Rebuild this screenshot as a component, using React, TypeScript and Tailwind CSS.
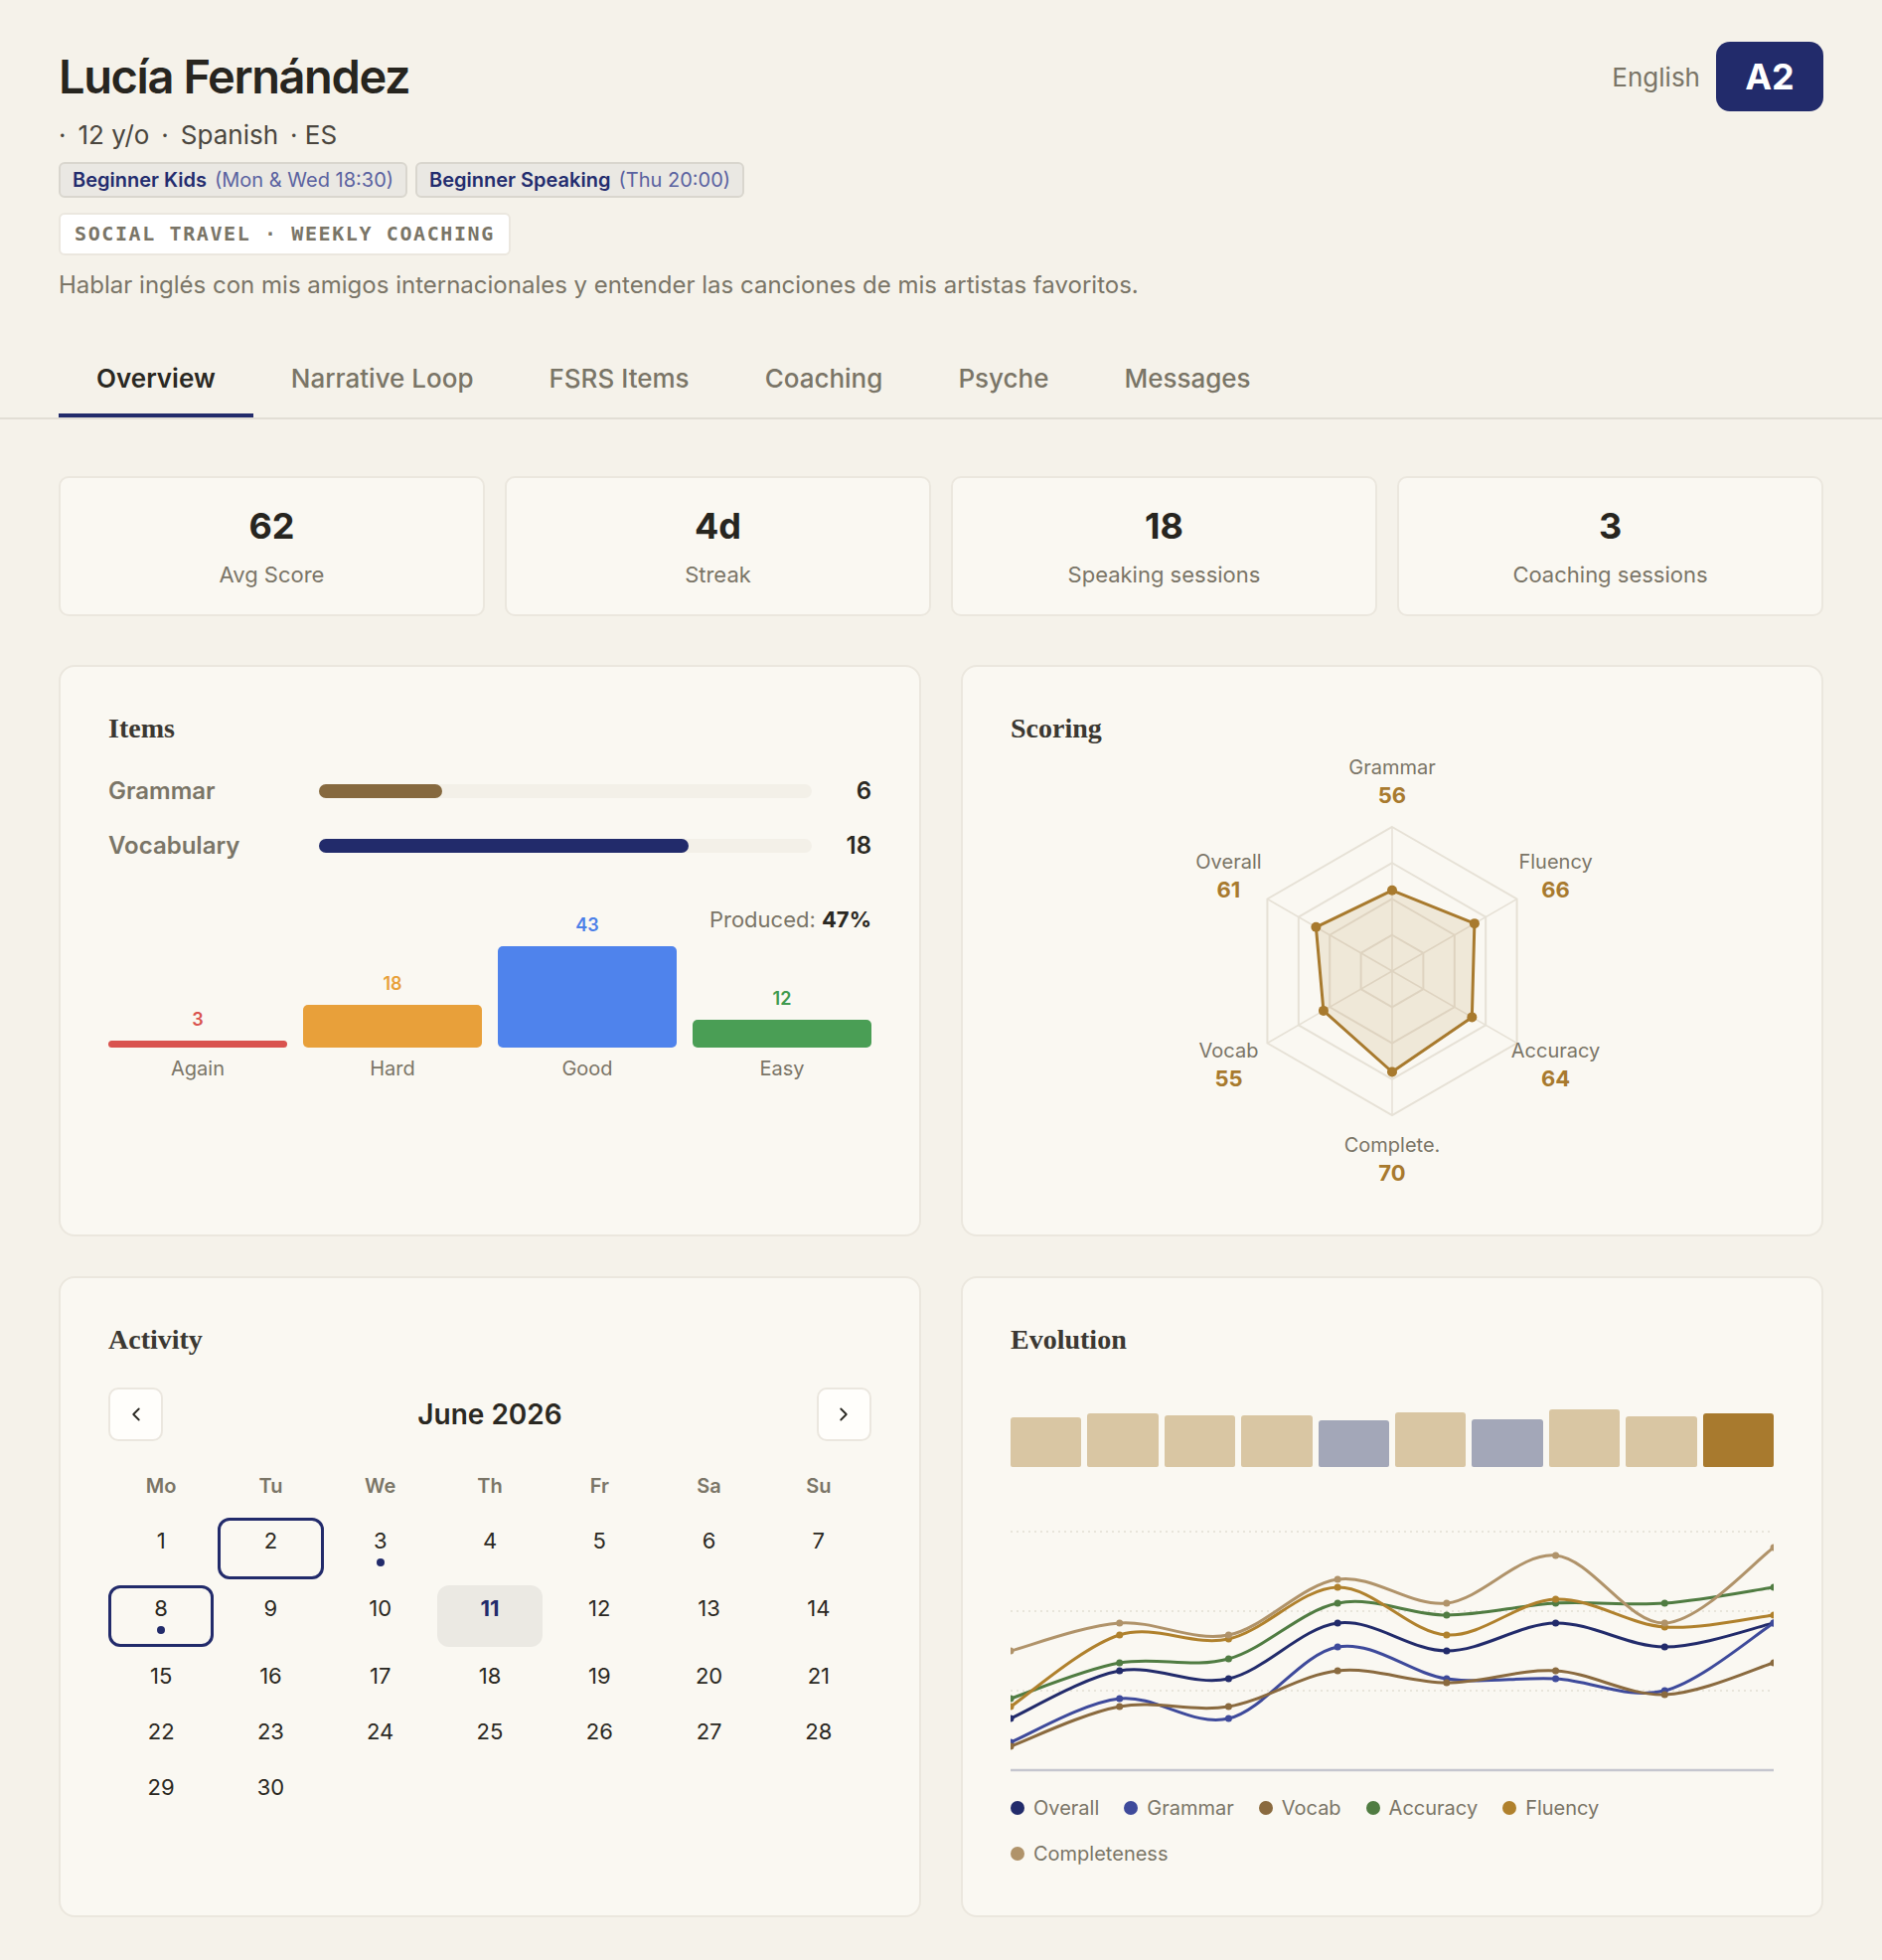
import { ChevronLeft, ChevronRight } from 'lucide-react'

const TABS = ['Overview', 'Narrative Loop', 'FSRS Items', 'Coaching', 'Psyche', 'Messages']

const STATS = [
  { value: '62', label: 'Avg Score' },
  { value: '4d', label: 'Streak' },
  { value: '18', label: 'Speaking sessions' },
  { value: '3', label: 'Coaching sessions' },
]

const ITEM_ROWS = [
  { label: 'Grammar', count: 6, bar: 'bg-[#86693f]' },
  { label: 'Vocabulary', count: 18, bar: 'bg-[#222b6b]' },
]

const RATINGS = [
  { label: 'Again', value: 3, bar: 'bg-[#d9534f]', text: 'text-[#d9534f]' },
  { label: 'Hard', value: 18, bar: 'bg-[#e8a03a]', text: 'text-[#e8a03a]' },
  { label: 'Good', value: 43, bar: 'bg-[#4f83ec]', text: 'text-[#4a7fe8]' },
  { label: 'Easy', value: 12, bar: 'bg-[#4a9e55]', text: 'text-[#3f9a4f]' },
]

const RADAR = [
  { label: 'Grammar', value: 56, angle: -90 },
  { label: 'Fluency', value: 66, angle: -30 },
  { label: 'Accuracy', value: 64, angle: 30 },
  { label: 'Complete.', value: 70, angle: 90 },
  { label: 'Vocab', value: 55, angle: 150 },
  { label: 'Overall', value: 61, angle: 210 },
]

const SESSIONS = [
  { h: 50, c: 'bg-[#d9c6a3]' },
  { h: 54, c: 'bg-[#d9c6a3]' },
  { h: 52, c: 'bg-[#d9c6a3]' },
  { h: 52, c: 'bg-[#d9c6a3]' },
  { h: 47, c: 'bg-[#a3a7b8]' },
  { h: 55, c: 'bg-[#d9c6a3]' },
  { h: 48, c: 'bg-[#a3a7b8]' },
  { h: 58, c: 'bg-[#d9c6a3]' },
  { h: 51, c: 'bg-[#d9c6a3]' },
  { h: 54, c: 'bg-[#a87a2e]' },
]

const SERIES = [
  { name: 'Overall', color: '#222b6b', dot: 'bg-[#222b6b]', values: [33, 45, 43, 57, 50, 57, 51, 57] },
  { name: 'Grammar', color: '#3e4a9b', dot: 'bg-[#3e4a9b]', values: [27, 38, 33, 51, 43, 43, 40, 57] },
  { name: 'Vocab', color: '#8a6a3f', dot: 'bg-[#8a6a3f]', values: [26, 36, 36, 45, 42, 45, 39, 47] },
  { name: 'Accuracy', color: '#507c42', dot: 'bg-[#507c42]', values: [38, 47, 48, 62, 59, 62, 62, 66] },
  { name: 'Fluency', color: '#b0812d', dot: 'bg-[#b0812d]', values: [36, 54, 53, 66, 54, 63, 56, 59] },
  { name: 'Completeness', color: '#b0936a', dot: 'bg-[#b0936a]', values: [50, 57, 54, 68, 62, 74, 57, 76] },
]

const WEEKDAYS = ['Mo', 'Tu', 'We', 'Th', 'Fr', 'Sa', 'Su']

function Panel({ title, children }: { title: string; children: React.ReactNode }) {
  return (
    <section className="rounded-[16px] border-2 border-[#ebe7de] bg-[#faf8f2] p-12">
      <h2 className="font-[family-name:Liberation_Serif,serif] text-[28px] leading-[28px] font-bold text-[#3b3832]">{title}</h2>
      {children}
    </section>
  )
}

function ItemsPanel() {
  const total = ITEM_ROWS.reduce((s, r) => s + r.count, 0)
  return (
    <Panel title="Items">
      <div className="mt-[33px] flex flex-col gap-[23px]">
        {ITEM_ROWS.map(r => (
          <div key={r.label} className="flex h-8 items-center">
            <span className="w-[212px] text-[24px] font-semibold text-[#7a7567]">{r.label}</span>
            <div className="h-[14px] flex-1 rounded-full bg-[#f3f0e8]">
              <div className={`h-full rounded-full ${r.bar}`} style={{ width: `${(r.count / total) * 100}%` }} />
            </div>
            <span className="w-[60px] text-right text-[24px] font-semibold text-[#2a2822]">{r.count}</span>
          </div>
        ))}
      </div>

      <div className="relative mt-[44px] flex h-[178px] items-end gap-4">
        <div className="absolute top-0 right-0 text-[22px] leading-[28px] text-[#7a7567]">
          Produced: <span className="font-bold text-[#2a2822]">47%</span>
        </div>
        {RATINGS.map(r => (
          <div key={r.label} className="flex flex-1 flex-col items-center">
            <span className={`mb-[10px] text-[18px] leading-[22px] font-semibold ${r.text}`}>{r.value}</span>
            <div className={`w-full rounded-[5px] ${r.bar}`} style={{ height: Math.max(6, (r.value / 43) * 102) }} />
            <span className="mt-[7px] text-[20px] leading-[28px] text-[#7a7567]">{r.label}</span>
          </div>
        ))}
      </div>
    </Panel>
  )
}

function ScoringPanel() {
  const cx = 384
  const cy = 230
  const R = 145
  const pt = (a: number, r: number) => {
    const rad = (a * Math.PI) / 180
    return [cx + r * Math.cos(rad), cy + r * Math.sin(rad)]
  }
  const ring = (f: number) => RADAR.map(d => pt(d.angle, R * f).join(',')).join(' ')
  const data = RADAR.map(d => pt(d.angle, (R * d.value) / 100))

  return (
    <Panel title="Scoring">
      <svg width="768" height="447" className="block">
        {[0.25, 0.5, 0.75, 1].map(f => (
          <polygon key={f} points={ring(f)} fill="none" stroke="#e6e1d6" strokeWidth="2" />
        ))}
        {RADAR.map(d => {
          const [x, y] = pt(d.angle, R)
          return <line key={d.label} x1={cx} y1={cy} x2={x} y2={y} stroke="#e6e1d6" strokeWidth="1.5" />
        })}
        <polygon points={data.map(p => p.join(',')).join(' ')} fill="#a87a2e" fillOpacity="0.13" stroke="#a87a2e" strokeWidth="3" strokeLinejoin="round" />
        {data.map(([x, y], i) => (
          <circle key={i} cx={x} cy={y} r="5" fill="#a87a2e" />
        ))}
        {RADAR.map(d => {
          const [x, y] = pt(d.angle, 190)
          return (
            <g key={d.label} textAnchor="middle">
              <text x={x} y={y - 13} dominantBaseline="middle" fontSize="20" fill="#7a7567">{d.label}</text>
              <text x={x} y={y + 15} dominantBaseline="middle" fontSize="22" fontWeight="700" fill="#a87a2e">{d.value}</text>
            </g>
          )
        })}
      </svg>
    </Panel>
  )
}

function ActivityPanel() {
  const days = Array.from({ length: 30 }, (_, i) => i + 1)
  const outlined = [2, 8]
  const dotted = [3, 8]
  const today = 11
  return (
    <Panel title="Activity">
      <div className="mt-[34px] flex items-center justify-between">
        <button className="flex h-[54px] w-[55px] items-center justify-center rounded-[10px] border-2 border-[#ebe7df] bg-[#fffefb] text-[#2a2822]">
          <ChevronLeft size={22} strokeWidth={2} />
        </button>
        <span className="text-[28px] font-semibold text-[#2a2822]">June 2026</span>
        <button className="flex h-[54px] w-[55px] items-center justify-center rounded-[10px] border-2 border-[#ebe7df] bg-[#fffefb] text-[#2a2822]">
          <ChevronRight size={22} strokeWidth={2} />
        </button>
      </div>
      <div className="mt-[33px] grid grid-cols-7 gap-x-1">
        {WEEKDAYS.map(d => (
          <span key={d} className="text-center text-[20px] leading-[24px] font-semibold text-[#7a7567]">{d}</span>
        ))}
      </div>
      <div className="mt-[20px] grid grid-cols-7 gap-x-1 gap-y-[6px]">
        {days.map(d => (
          <div
            key={d}
            className={`flex flex-col items-center rounded-[12px] border-[3px] pt-[6px] pb-[10px] ${
              outlined.includes(d) ? 'border-[#222b6b]' : d === today ? 'border-transparent bg-[#ebe9e3]' : 'border-transparent'
            }`}
          >
            <span className={`text-[22px] leading-[28px] ${d === today ? 'font-bold text-[#222b6b]' : 'text-[#2a2822]'}`}>{d}</span>
            {dotted.includes(d) && <span className="mt-1 h-2 w-2 rounded-full bg-[#222b6b]" />}
          </div>
        ))}
      </div>
    </Panel>
  )
}

function smoothPath(pts: number[][]) {
  let d = `M${pts[0][0]},${pts[0][1]}`
  for (let i = 0; i < pts.length - 1; i++) {
    const p0 = pts[i - 1] || pts[i]
    const p1 = pts[i]
    const p2 = pts[i + 1]
    const p3 = pts[i + 2] || p2
    const c1 = [p1[0] + (p2[0] - p0[0]) / 6, p1[1] + (p2[1] - p0[1]) / 6]
    const c2 = [p2[0] - (p3[0] - p1[0]) / 6, p2[1] - (p3[1] - p1[1]) / 6]
    d += ` C${c1[0]},${c1[1]} ${c2[0]},${c2[1]} ${p2[0]},${p2[1]}`
  }
  return d
}

function EvolutionPanel() {
  const W = 768
  const y = (v: number) => 285 - (v - 20) * 4
  const x = (i: number) => (i * W) / 7
  return (
    <Panel title="Evolution">
      <div className="mt-[54px] flex h-[60px] items-end gap-[6px]">
        {SESSIONS.map((s, i) => (
          <div key={i} className={`flex-1 rounded-t-[3px] rounded-b-[2px] ${s.c}`} style={{ height: s.h }} />
        ))}
      </div>
      <svg width={W} height="295" className="mt-5 block">
        {[80, 60, 40].map(v => (
          <line key={v} x1="0" x2={W} y1={y(v)} y2={y(v)} stroke="#e2ded4" strokeWidth="1.5" strokeDasharray="2 4" />
        ))}
        <line x1="0" x2={W} y1="285" y2="285" stroke="#c5c6cf" strokeWidth="2.5" />
        {SERIES.map(s => {
          const pts = s.values.map((v, i) => [x(i), y(v)])
          return (
            <g key={s.name}>
              <path d={smoothPath(pts)} fill="none" stroke={s.color} strokeWidth="3" />
              {pts.map(([px, py], i) => (
                <circle key={i} cx={px} cy={py} r="3.5" fill={s.color} />
              ))}
            </g>
          )
        })}
      </svg>
      <div className="mt-[14px] flex flex-wrap gap-x-[25px] gap-y-[18px]">
        {SERIES.map(s => (
          <div key={s.name} className="flex items-center gap-[9px]">
            <span className={`h-[14px] w-[14px] rounded-full ${s.dot}`} />
            <span className="text-[20px] leading-[28px] text-[#7a7567]">{s.name}</span>
          </div>
        ))}
      </div>
    </Panel>
  )
}

export default function App() {
  return (
    <div className="min-h-screen bg-[#f5f2ea] pb-[44px] font-[family-name:Inter,sans-serif] text-[#2a2822]">
      <header className="px-[59px] pt-[42px]">
        <div className="flex items-center justify-between">
          <h1 className="text-[47px] leading-[56px] font-semibold tracking-[-0.03em] text-[#27251f]">Lucía Fernández</h1>
          <div className="flex items-center gap-4">
            <span className="text-[26px] text-[#7a7567]">English</span>
            <span className="flex h-[70px] w-[108px] items-center justify-center rounded-[14px] bg-[#222b6b] text-[36px] font-bold text-white">A2</span>
          </div>
        </div>
        <div className="mt-2 flex items-center gap-3 text-[26px] leading-[32px] text-[#4a463e]">
          <span>·</span>
          <span>12 y/o</span>
          <span>·</span>
          <span>Spanish</span>
          <span>· ES</span>
        </div>
        <div className="mt-[11px] flex gap-2">
          <span className="rounded-[6px] border-2 border-[#d9d6ce] bg-[#eae8e3] px-3 text-[20px] leading-[32px]">
            <span className="font-semibold text-[#232c6e]">Beginner Kids</span>
            <span className="ml-2 text-[#5a62a0]">(Mon &amp; Wed 18:30)</span>
          </span>
          <span className="rounded-[6px] border-2 border-[#d9d6ce] bg-[#eae8e3] px-3 text-[20px] leading-[32px]">
            <span className="font-semibold text-[#232c6e]">Beginner Speaking</span>
            <span className="ml-2 text-[#5a62a0]">(Thu 20:00)</span>
          </span>
        </div>
        <div className="mt-[15px] inline-block rounded-[6px] border-2 border-[#ebe7df] bg-white px-[14px] font-[family-name:DejaVu_Sans_Mono,monospace] text-[20px] leading-[39px] font-bold tracking-[1.6px] text-[#7a7567]">
          SOCIAL TRAVEL · WEEKLY COACHING
        </div>
        <p className="mt-[15px] text-[24px] leading-[30px] text-[#7a7567]">
          Hablar inglés con mis amigos internacionales y entender las canciones de mis artistas favoritos.
        </p>
      </header>

      <nav className="mt-10 flex border-b-2 border-[#e2ded5] px-[59px]">
        {TABS.map((t, i) => (
          <button
            key={t}
            className={`border-b-4 px-[38px] pt-6 pb-5 text-[26px] leading-[30px] ${
              i === 0 ? 'border-[#222b6b] font-semibold text-[#2a2822]' : 'border-transparent font-medium text-[#7a7567]'
            }`}
          >
            {t}
          </button>
        ))}
      </nav>

      <main className="px-[59px]">
        <div className="mt-[57px] grid grid-cols-4 gap-5">
          {STATS.map(s => (
            <div key={s.label} className="flex h-[141px] flex-col items-center justify-center gap-[15px] rounded-[10px] border-2 border-[#ebe7de] bg-[#faf8f2] pt-[2px]">
              <span className="text-[36px] leading-[40px] font-bold text-[#27251f]">{s.value}</span>
              <span className="text-[22px] leading-[28px] text-[#7a7567]">{s.label}</span>
            </div>
          ))}
        </div>

        <div className="mt-[49px] grid grid-cols-2 gap-10">
          <ItemsPanel />
          <ScoringPanel />
          <ActivityPanel />
          <EvolutionPanel />
        </div>
      </main>
    </div>
  )
}
